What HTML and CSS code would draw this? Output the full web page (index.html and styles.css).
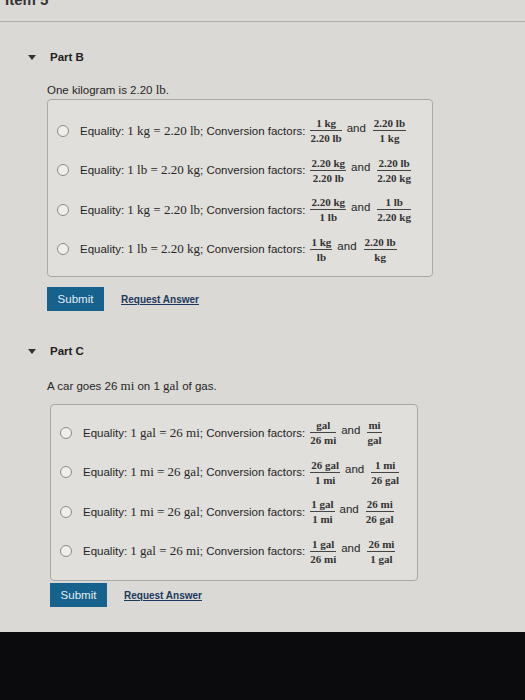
FILE: index.html
```html
<!DOCTYPE html>
<html lang="en">
<head>
  <meta charset="UTF-8">
  <title>Item 5</title>
  <link rel="stylesheet" href="styles.css">
</head>
<body>
  <div class="page">
    <div class="item-head"><div class="item-title">Item 5</div></div>

    <!-- Part B -->
    <div class="part part-b">
      <div class="part-head"><span class="caret"></span><span>Part B</span></div>
      <p class="question">One kilogram is 2.20 <span class="m">lb</span>.</p>
      <div class="choices">
        <label class="choice">
          <span class="radio"></span>
          <span>Equality: <span class="m">1 kg = 2.20 lb</span>; Conversion factors:</span>
          <span class="frac"><span class="num">1 kg</span><span class="den">2.20 lb</span></span>
          <span class="and">and</span>
          <span class="frac"><span class="num">2.20 lb</span><span class="den">1 kg</span></span>
        </label>
        <label class="choice">
          <span class="radio"></span>
          <span>Equality: <span class="m">1 lb = 2.20 kg</span>; Conversion factors:</span>
          <span class="frac"><span class="num">2.20 kg</span><span class="den">2.20 lb</span></span>
          <span class="and">and</span>
          <span class="frac"><span class="num">2.20 lb</span><span class="den">2.20 kg</span></span>
        </label>
        <label class="choice">
          <span class="radio"></span>
          <span>Equality: <span class="m">1 kg = 2.20 lb</span>; Conversion factors:</span>
          <span class="frac"><span class="num">2.20 kg</span><span class="den">1 lb</span></span>
          <span class="and">and</span>
          <span class="frac"><span class="num">1 lb</span><span class="den">2.20 kg</span></span>
        </label>
        <label class="choice">
          <span class="radio"></span>
          <span>Equality: <span class="m">1 lb = 2.20 kg</span>; Conversion factors:</span>
          <span class="frac"><span class="num">1 kg</span><span class="den">lb</span></span>
          <span class="and">and</span>
          <span class="frac"><span class="num">2.20 lb</span><span class="den">kg</span></span>
        </label>
      </div>
      <div class="actions">
        <button class="submit">Submit</button>
        <a class="request" href="#">Request Answer</a>
      </div>
    </div>

    <!-- Part C -->
    <div class="part part-c">
      <div class="part-head"><span class="caret"></span><span>Part C</span></div>
      <p class="question">A car goes 26 <span class="m">mi</span> on 1 <span class="m">gal</span> of gas.</p>
      <div class="choices">
        <label class="choice">
          <span class="radio"></span>
          <span>Equality: <span class="m">1 gal = 26 mi</span>; Conversion factors:</span>
          <span class="frac"><span class="num">gal</span><span class="den">26 mi</span></span>
          <span class="and">and</span>
          <span class="frac"><span class="num">mi</span><span class="den">gal</span></span>
        </label>
        <label class="choice">
          <span class="radio"></span>
          <span>Equality: <span class="m">1 mi = 26 gal</span>; Conversion factors:</span>
          <span class="frac"><span class="num">26 gal</span><span class="den">1 mi</span></span>
          <span class="and">and</span>
          <span class="frac"><span class="num">1 mi</span><span class="den">26 gal</span></span>
        </label>
        <label class="choice">
          <span class="radio"></span>
          <span>Equality: <span class="m">1 mi = 26 gal</span>; Conversion factors:</span>
          <span class="frac"><span class="num">1 gal</span><span class="den">1 mi</span></span>
          <span class="and">and</span>
          <span class="frac"><span class="num">26 mi</span><span class="den">26 gal</span></span>
        </label>
        <label class="choice">
          <span class="radio"></span>
          <span>Equality: <span class="m">1 gal = 26 mi</span>; Conversion factors:</span>
          <span class="frac"><span class="num">1 gal</span><span class="den">26 mi</span></span>
          <span class="and">and</span>
          <span class="frac"><span class="num">26 mi</span><span class="den">1 gal</span></span>
        </label>
      </div>
      <div class="actions">
        <button class="submit">Submit</button>
        <a class="request" href="#">Request Answer</a>
      </div>
    </div>
  </div>
  <div class="screen-edge"></div>
</body>
</html>
```

FILE: styles.css
```css
body {
  margin: 0;
  font-family: "Liberation Sans", Arial, sans-serif;
  color: #262626;
  background-color: #0b0b0d;
}
.page {
  background-color: #dad9d5;
  height: 632px;
  overflow: hidden;
}
.item-head {
  height: 21px;
  border-bottom: 1px solid #aeaeaa;
  overflow: hidden;
}
.item-title {
  margin: -9px 0 0 5px;
  font-size: 15px;
  font-weight: bold;
  color: #333;
}
.part {
  padding-left: 47px;
}
.part-head {
  display: flex;
  align-items: center;
  gap: 14px;
  margin-left: -19px;
  margin-top: 27px;
  font-size: 11.5px;
  font-weight: bold;
  line-height: 16px;
  color: #222;
}
.caret {
  width: 0;
  height: 0;
  border-left: 4px solid transparent;
  border-right: 4px solid transparent;
  border-top: 5px solid #333;
}
.question {
  margin: 18px 0 0 0;
  font-size: 11.5px;
  line-height: 14px;
}
.m {
  font-family: "Liberation Serif", "Times New Roman", serif;
  font-size: 13px;
}
.choices {
  margin-top: 2px;
  width: 386px;
  height: 178px;
  box-sizing: border-box;
  padding: 11px 0 0 9px;
  border: 1px solid #a9a9a5;
  border-radius: 4px;
  background-color: #e0dfdb;
}
.part-c .part-head {
  margin-top: 32px;
}
.part-c .question {
  margin-top: 20px;
}
.part-c .choices,
.part-c .actions {
  margin-left: 3px;
}
.part-c .choices {
  margin-top: 11px;
  width: 368px;
  height: 177px;
  padding-top: 8px;
}
.choice {
  display: flex;
  align-items: center;
  height: 39.5px;
  font-size: 11.5px;
  white-space: nowrap;
}
.radio {
  width: 10px;
  height: 10px;
  border: 1px solid #8a8a88;
  border-radius: 50%;
  background-color: #eeeeea;
  margin-right: 11px;
  flex-shrink: 0;
}
.frac {
  display: inline-flex;
  flex-direction: column;
  align-items: center;
  margin-left: 5px;
  font-family: "Liberation Serif", "Times New Roman", serif;
  font-size: 11px;
  font-weight: bold;
  line-height: 12px;
  color: #333;
}
.frac .num {
  padding: 0 1px 1px;
  border-bottom: 1px solid #444;
  align-self: stretch;
  text-align: center;
}
.frac .den {
  padding-top: 1px;
}
.and {
  margin: 0 2px 0 5px;
  position: relative;
  top: -3px;
}
.actions {
  display: flex;
  align-items: center;
  gap: 17px;
  margin-top: 10px;
}
.part-c .actions {
  margin-top: 2px;
}
.submit {
  height: 24px;
  width: 57px;
  border: none;
  background-color: #16628c;
  color: #e4ecf2;
  font-family: "Liberation Sans", Arial, sans-serif;
  font-size: 11.5px;
  padding: 0;
}
.request {
  color: #1c3a5e;
  font-size: 10px;
  font-weight: bold;
  text-decoration: underline;
}
.screen-edge {
  height: 68px;
  background-color: #0b0b0d;
}
```
